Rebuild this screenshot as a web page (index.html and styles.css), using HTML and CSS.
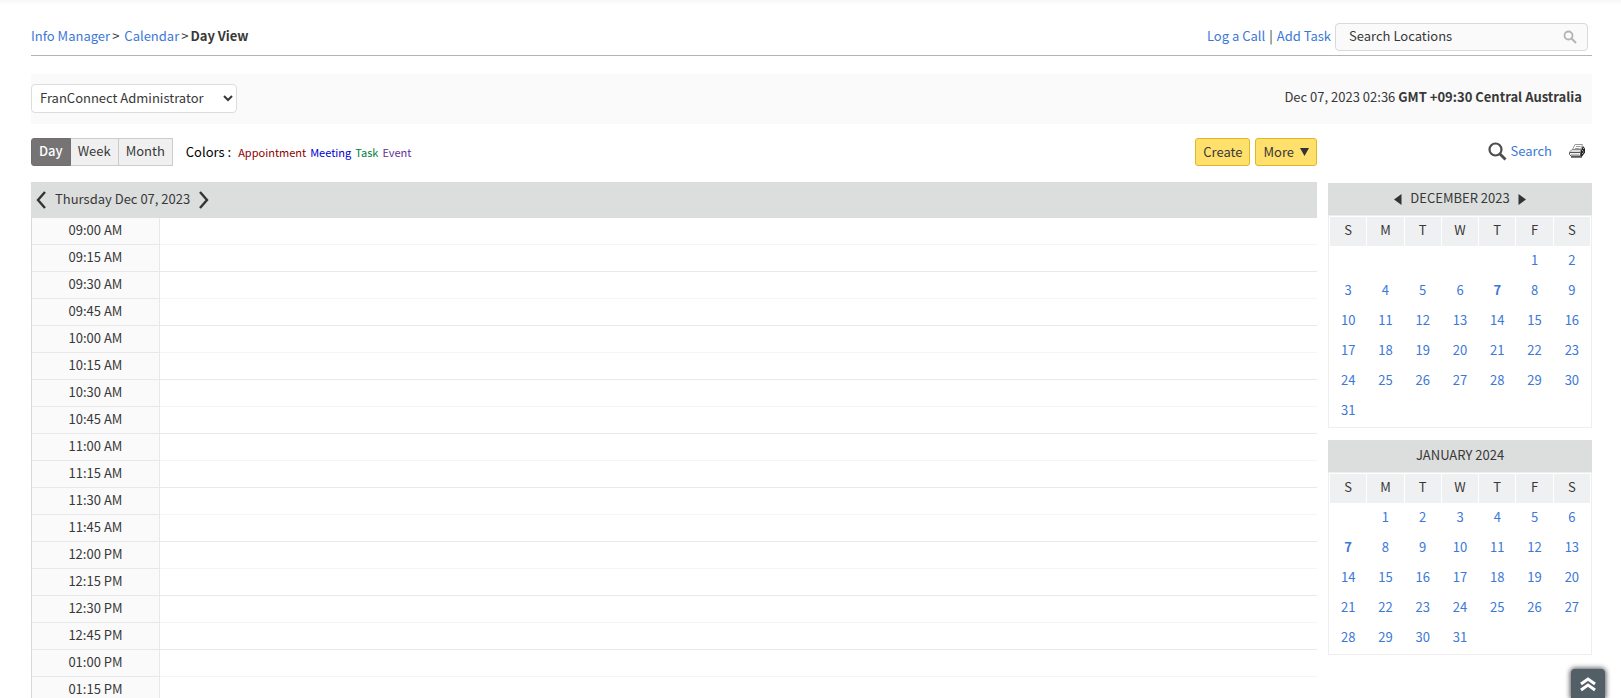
FILE: index.html
```html
<!DOCTYPE html>
<html lang="en">
<head>
    <meta charset="UTF-8">
    <meta name="viewport" content="width=device-width, initial-scale=1.0">
    <title>Calendar - Day View</title>
    <link rel="stylesheet" href="styles.css">
</head>
<body>
    <div class="page">
        <header class="top-bar">
            <nav class="breadcrumb">
                <a href="#">Info Manager</a><span>&gt;</span><a href="#" class="parent">Calendar</a><span>&gt;</span><strong>Day View</strong>
            </nav>
            <div class="quick-links">
                <a href="#">Log a Call</a> <span>|</span> <a href="#">Add Task</a>
                <div class="search-box">
                    <input type="text" value="Search Locations" aria-label="Search Locations">
                    <button type="button" aria-label="Go">
                        <svg width="14" height="14" viewBox="0 0 14 14"><circle cx="5.5" cy="5.5" r="4" fill="none" stroke="#b4b4b4" stroke-width="1.8"/><path d="M8.5 8.5L13 13" stroke="#b4b4b4" stroke-width="2"/></svg>
                    </button>
                </div>
            </div>
        </header>

        <div class="filter-bar">
            <select aria-label="User">
                <option>FranConnect Administrator</option>
            </select>
            <div>Dec 07, 2023 02:36 <strong>GMT +09:30 Central Australia</strong></div>
        </div>

        <div class="content">
            <main class="schedule">
                <div class="toolbar">
                    <div class="tabs">
                        <button type="button" class="active">Day</button>
                        <button type="button">Week</button>
                        <button type="button">Month</button>
                    </div>
                    <div class="legend">
                        <span class="legend-title">Colors :</span>
                        <span class="appointment">Appointment</span>
                        <span class="meeting">Meeting</span>
                        <span class="task">Task</span>
                        <span class="event">Event</span>
                    </div>
                    <div class="actions">
                        <button type="button">Create</button>
                        <button type="button">More <svg width="9" height="8" viewBox="0 0 9 8"><path d="M0 0H9L4.5 8Z" fill="#333"/></svg></button>
                    </div>
                </div>

                <div class="day-header">
                    <a href="#" aria-label="Previous day"><svg width="10" height="18" viewBox="0 0 10 18"><path d="M9 1L2 9L9 17" fill="none" stroke="#333" stroke-width="2.4"/></svg></a>
                    <span>Thursday Dec 07, 2023</span>
                    <a href="#" aria-label="Next day"><svg width="10" height="18" viewBox="0 0 10 18"><path d="M1 1L8 9L1 17" fill="none" stroke="#333" stroke-width="2.4"/></svg></a>
                </div>
                <table class="slots">
                    <tbody>
                        <tr><th scope="row">09:00 AM</th><td></td></tr>
                        <tr><th scope="row">09:15 AM</th><td></td></tr>
                        <tr><th scope="row">09:30 AM</th><td></td></tr>
                        <tr><th scope="row">09:45 AM</th><td></td></tr>
                        <tr><th scope="row">10:00 AM</th><td></td></tr>
                        <tr><th scope="row">10:15 AM</th><td></td></tr>
                        <tr><th scope="row">10:30 AM</th><td></td></tr>
                        <tr><th scope="row">10:45 AM</th><td></td></tr>
                        <tr><th scope="row">11:00 AM</th><td></td></tr>
                        <tr><th scope="row">11:15 AM</th><td></td></tr>
                        <tr><th scope="row">11:30 AM</th><td></td></tr>
                        <tr><th scope="row">11:45 AM</th><td></td></tr>
                        <tr><th scope="row">12:00 PM</th><td></td></tr>
                        <tr><th scope="row">12:15 PM</th><td></td></tr>
                        <tr><th scope="row">12:30 PM</th><td></td></tr>
                        <tr><th scope="row">12:45 PM</th><td></td></tr>
                        <tr><th scope="row">01:00 PM</th><td></td></tr>
                        <tr><th scope="row">01:15 PM</th><td></td></tr>
                    </tbody>
                </table>
            </main>

            <aside class="sidebar">
                <div class="side-tools">
                    <a href="#" class="search-link"><svg width="19" height="19" viewBox="0 0 19 19"><circle cx="7.5" cy="7.5" r="6" fill="none" stroke="#4d4d4d" stroke-width="2.2"/><path d="M12 12L17.5 17.5" stroke="#4d4d4d" stroke-width="2.8"/></svg>Search</a>
                    <a href="#" aria-label="Print">
                        <svg width="17" height="16" viewBox="0 0 17 16">
                            <path d="M6 1.5H13.500L11.500 6.500H3.500Z" fill="#fff" stroke="#999"/>
                            <path d="M7 3.500H11.500M6 5.500H10.500" stroke="#999"/>
                            <path d="M12 7L14 3L16 5.500V9.500L13 13.500H11.500Z" fill="#222"/>
                            <path d="M1 8.500L3 6.500H12L11 9.500H1Z" fill="#ddd" stroke="#888"/>
                            <path d="M.5 9.500H11.500V13H2L.5 11.500Z" fill="#f2f2f2" stroke="#555"/>
                            <path d="M2 11.500H10" stroke="#bbb"/>
                            <path d="M2 14H13" stroke="#000"/>
                            <path d="M13 7.500H14M14 5.500H15M13 10.500H14M14 9H15" stroke="#bbb"/>
                        </svg>
                    </a>
                </div>

                <section class="month">
                    <div class="month-title">
                        <a href="#" aria-label="Previous month"><svg width="8" height="11" viewBox="0 0 8 11"><path d="M7.5 0V11L0 5.5Z" fill="#333"/></svg></a>
                        <span>DECEMBER 2023</span>
                        <a href="#" aria-label="Next month"><svg width="8" height="11" viewBox="0 0 8 11"><path d="M.5 0V11L8 5.5Z" fill="#333"/></svg></a>
                    </div>
                    <table>
                        <thead>
                            <tr><th>S</th><th>M</th><th>T</th><th>W</th><th>T</th><th>F</th><th>S</th></tr>
                        </thead>
                        <tbody>
                            <tr><td></td><td></td><td></td><td></td><td></td><td><a href="#">1</a></td><td><a href="#">2</a></td></tr>
                            <tr><td><a href="#">3</a></td><td><a href="#">4</a></td><td><a href="#">5</a></td><td><a href="#">6</a></td><td><a href="#" class="today">7</a></td><td><a href="#">8</a></td><td><a href="#">9</a></td></tr>
                            <tr><td><a href="#">10</a></td><td><a href="#">11</a></td><td><a href="#">12</a></td><td><a href="#">13</a></td><td><a href="#">14</a></td><td><a href="#">15</a></td><td><a href="#">16</a></td></tr>
                            <tr><td><a href="#">17</a></td><td><a href="#">18</a></td><td><a href="#">19</a></td><td><a href="#">20</a></td><td><a href="#">21</a></td><td><a href="#">22</a></td><td><a href="#">23</a></td></tr>
                            <tr><td><a href="#">24</a></td><td><a href="#">25</a></td><td><a href="#">26</a></td><td><a href="#">27</a></td><td><a href="#">28</a></td><td><a href="#">29</a></td><td><a href="#">30</a></td></tr>
                            <tr><td><a href="#">31</a></td><td></td><td></td><td></td><td></td><td></td><td></td></tr>
                        </tbody>
                    </table>
                </section>

                <section class="month">
                    <div class="month-title"><span>JANUARY 2024</span></div>
                    <table>
                        <thead>
                            <tr><th>S</th><th>M</th><th>T</th><th>W</th><th>T</th><th>F</th><th>S</th></tr>
                        </thead>
                        <tbody>
                            <tr><td></td><td><a href="#">1</a></td><td><a href="#">2</a></td><td><a href="#">3</a></td><td><a href="#">4</a></td><td><a href="#">5</a></td><td><a href="#">6</a></td></tr>
                            <tr><td><a href="#" class="today">7</a></td><td><a href="#">8</a></td><td><a href="#">9</a></td><td><a href="#">10</a></td><td><a href="#">11</a></td><td><a href="#">12</a></td><td><a href="#">13</a></td></tr>
                            <tr><td><a href="#">14</a></td><td><a href="#">15</a></td><td><a href="#">16</a></td><td><a href="#">17</a></td><td><a href="#">18</a></td><td><a href="#">19</a></td><td><a href="#">20</a></td></tr>
                            <tr><td><a href="#">21</a></td><td><a href="#">22</a></td><td><a href="#">23</a></td><td><a href="#">24</a></td><td><a href="#">25</a></td><td><a href="#">26</a></td><td><a href="#">27</a></td></tr>
                            <tr><td><a href="#">28</a></td><td><a href="#">29</a></td><td><a href="#">30</a></td><td><a href="#">31</a></td><td></td><td></td><td></td></tr>
                        </tbody>
                    </table>
                </section>
            </aside>
        </div>
    </div>

    <a href="#" class="back-to-top" aria-label="Back to top">
        <svg width="16" height="16" viewBox="0 0 16 16"><path d="M1 8L8 3L15 8M1 14L8 9L15 14" fill="none" stroke="#fff" stroke-width="3"/></svg>
    </a>
</body>
</html>
```
FILE: styles.css
```css
* {
    box-sizing: border-box;
}
body {
    margin: 0;
    font-family: "Noto Sans CJK SC", "Open Sans", sans-serif;
    font-size: 13px;
    line-height: 20px;
    color: #383838;
    background: #fff;
}
a {
    color: #3c78d8;
    text-decoration: none;
}
button, input, select {
    font: inherit;
    color: inherit;
}
svg {
    display: block;
}
.page {
    height: 100vh;
    overflow: hidden;
    padding: 18px 29px 0 31px;
    background: linear-gradient(#f7f7f7, #fff 5px);
}

/* breadcrumb and quick links */
.top-bar {
    display: flex;
    justify-content: space-between;
    align-items: center;
    height: 38px;
    border-bottom: 1px solid #b4b4b4;
}
.breadcrumb {
    display: flex;
    gap: 2px;
    padding-bottom: 2px;
}
.breadcrumb .parent {
    margin-left: 3px;
}
.quick-links {
    display: flex;
    align-items: center;
    gap: 4px;
    padding-right: 4px;
}
.quick-links > a, .quick-links > span {
    padding-bottom: 2px;
}
.search-box {
    display: flex;
    align-items: center;
    width: 253px;
    height: 28px;
    padding: 0 10px 0 13px;
    border: 1px solid #d9d9d9;
    border-radius: 4px;
    background: #fafafa;
}
.search-box input {
    flex: 1;
    min-width: 0;
    padding: 0 0 2px;
    border: 0;
    outline: none;
    background: none;
}
.search-box button {
    padding: 0;
    border: 0;
    background: none;
}

.filter-bar {
    display: flex;
    justify-content: space-between;
    margin-top: 18px;
    padding: 10px 10px 11px 0;
    background: #fafafa;
    line-height: 26px;
}
.filter-bar select {
    width: 206px;
    height: 29px;
    padding: 0 4px 2px;
    border: 1px solid #ddd;
    border-radius: 4px;
    background: #fff;
}

.content {
    display: flex;
    gap: 11px;
    padding-top: 14px;
}
.schedule {
    flex: 1;
    min-width: 0;
}
.toolbar {
    display: flex;
    align-items: center;
    height: 28px;
    margin-bottom: 16px;
}
.tabs {
    display: flex;
}
.tabs button {
    height: 28px;
    padding: 0 7px 2px;
    border: 1px solid #ccc;
    border-left: 0;
    background: #f0f0f0;
}
.tabs .active {
    border-color: #706e6e;
    border-left: 1px solid #706e6e;
    border-radius: 3px 0 0 3px;
    background: #757373;
    color: #fff;
    font-weight: 500;
}
.legend {
    display: flex;
    align-items: baseline;
    gap: 4px;
    margin-left: 13px;
    font-size: 11px;
}
.legend-title {
    margin-right: 3px;
    font-size: 13px;
    color: #000;
}
.appointment {
    color: #8b0000;
}
.meeting {
    color: #0000cd;
}
.task {
    color: #008040;
}
.event {
    color: #6030a0;
}
.actions {
    display: flex;
    gap: 5px;
    margin-left: auto;
}
.actions button {
    display: flex;
    align-items: center;
    gap: 6px;
    height: 28px;
    padding: 0 7px 1px;
    border: 1px solid #e3b81c;
    border-radius: 3px;
    background: #ffe06c;
}

/* day grid */
.day-header {
    display: flex;
    align-items: center;
    gap: 9px;
    height: 36px;
    padding: 0 5px;
    background: #dcdedd;
}
.day-header span, .month-title span {
    padding-bottom: 2px;
}
.slots {
    width: 100%;
    border-collapse: separate;
    border-spacing: 0;
    table-layout: fixed;
}
.slots th {
    width: 129px;
    height: 27px;
    padding: 0 0 2px;
    border: 1px solid #e8e8e8;
    border-top: 0;
    border-left-color: #d8d8d8;
    background: #fafafa;
    font-weight: 400;
}
.slots td {
    padding: 0;
    border-bottom: 1px solid #f5f5f5;
}
.slots tr:nth-child(even) td {
    border-bottom-color: #e9e9e9;
}

/* small calendars */
.sidebar {
    width: 264px;
}
.side-tools {
    display: flex;
    justify-content: flex-end;
    align-items: center;
    gap: 17px;
    height: 26px;
    margin-bottom: 19px;
    padding-right: 6px;
}
.search-link {
    display: flex;
    align-items: center;
    gap: 4px;
}
.month {
    margin-bottom: 12px;
}
.month-title {
    display: flex;
    justify-content: center;
    align-items: center;
    gap: 8px;
    height: 32px;
    background: #dcdedd;
}
.month table {
    width: 100%;
    border: 1px solid #eee;
    border-spacing: 1px;
    table-layout: fixed;
    text-align: center;
}
.month th {
    height: 29px;
    padding: 0 0 3px;
    background: #eff0f2;
    font-weight: 400;
}
.month td {
    height: 29px;
    padding: 0 0 3px;
}
.today {
    font-weight: 700;
}

.back-to-top {
    position: fixed;
    right: 16px;
    bottom: 0;
    display: flex;
    justify-content: center;
    padding: 7px 9px 6px;
    border-radius: 4px 4px 0 0;
    background: #535f67;
    box-shadow: 0 0 5px 1px #555;
}
```
